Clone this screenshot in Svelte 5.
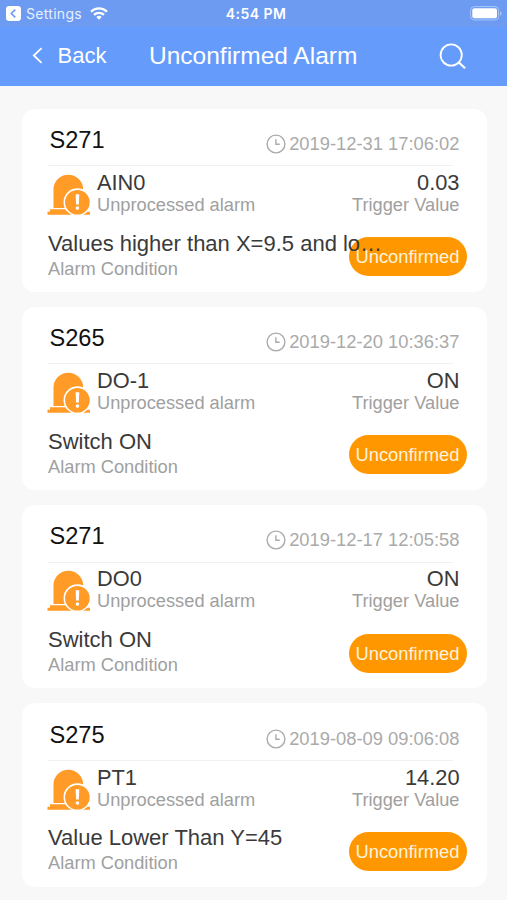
<script lang="ts">
  interface Alarm {
    station: string;
    time: string;
    name: string;
    value: string;
    condition: string;
  }

  const alarms: Alarm[] = [
    {
      station: 'S271',
      time: '2019-12-31 17:06:02',
      name: 'AIN0',
      value: '0.03',
      condition: 'Values higher than X=9.5 and lo…'
    },
    { station: 'S265', time: '2019-12-20 10:36:37', name: 'DO-1', value: 'ON', condition: 'Switch ON' },
    { station: 'S271', time: '2019-12-17 12:05:58', name: 'DO0', value: 'ON', condition: 'Switch ON' },
    { station: 'S275', time: '2019-08-09 09:06:08', name: 'PT1', value: '14.20', condition: 'Value Lower Than Y=45' }
  ];
</script>

<div class="screen">
  <header>
    <div class="status-bar">
      <div class="status-left">
        <svg width="15" height="15" viewBox="0 0 15 15">
          <rect width="15" height="15" rx="3.2" fill="#fff" />
          <path d="M9.3 3.6 5.3 7.5l4 3.9" fill="none" stroke="#6b9bf2" stroke-width="1.6" />
        </svg>
        <span class="settings">Settings</span>
        <svg class="wifi" width="18" height="13" viewBox="0 0 18 13">
          <g fill="none" stroke="#fff" stroke-width="2.3">
            <path d="M1 4.7a11.4 11.4 0 0 1 16 0" />
            <path d="M4 7.9a7.2 7.2 0 0 1 10 0" />
          </g>
          <path d="M6.3 10a3.9 3.9 0 0 1 5.4 0L9 12.8z" fill="#fff" />
        </svg>
      </div>
      <span class="clock">4:54 PM</span>
      <svg class="battery" width="32" height="15" viewBox="0 0 32 15">
        <rect x=".6" y=".6" width="28" height="13.3" rx="3.6" fill="none" stroke="#a9c6fb" />
        <rect x="2.3" y="2.3" width="24.7" height="9.9" rx="2" fill="#fff" />
        <path d="M30 5v4.8q1.6-.7 1.6-2.4T30 5z" fill="#a9c6fb" />
      </svg>
    </div>
    <nav class="nav-bar">
      <button class="back">
        <svg width="11" height="17" viewBox="0 0 11 17">
          <path d="M9.6 1.1 1.8 8.5l7.8 7.4" fill="none" stroke="#fff" stroke-width="1.8" />
        </svg>
        <span>Back</span>
      </button>
      <h1>Unconfirmed Alarm</h1>
      <button class="search" aria-label="Search">
        <svg width="28" height="27" viewBox="0 0 28 27" fill="none" stroke="#fff" stroke-width="1.8">
          <circle cx="12.2" cy="12" r="10.6" />
          <path d="m19.6 19.2 6.5 6" stroke-width="2.2" />
        </svg>
      </button>
    </nav>
  </header>

  <main>
    {#each alarms as alarm}
      <article class="card">
        <div class="card-head">
          <h2>{alarm.station}</h2>
          <div class="time">
            <svg width="20" height="20" viewBox="0 0 20 20" fill="none" stroke="#aaa" stroke-width="1.4">
              <circle cx="10" cy="10" r="8.9" />
              <path d="M9.9 5.2v5.1h3.8" />
            </svg>
            <span>{alarm.time}</span>
          </div>
        </div>

        <div class="card-row">
          <svg class="siren" width="44" height="42" viewBox="0 0 44 42">
            <path d="M6.5 34V15.5a14.8 14.8 0 0 1 29.6 0V34z" fill="#ff9b26" />
            <path d="M3 35.3h37.5v2.4H43v3H.5v-3H3z" fill="#ff9b26" />
            <circle cx="30.4" cy="28.2" r="13.1" fill="#ff9b26" stroke="#fff" stroke-width="1.6" />
            <path d="M28.6 20.2h3.7l-.5 10.3h-2.7z" fill="#fff" />
            <circle cx="30.45" cy="34.1" r="1.8" fill="#fff" />
          </svg>
          <div class="pair">
            <strong>{alarm.name}</strong>
            <small>Unprocessed alarm</small>
          </div>
          <div class="pair right">
            <strong>{alarm.value}</strong>
            <small>Trigger Value</small>
          </div>
        </div>

        <div class="condition">
          <p>{alarm.condition}</p>
          <small>Alarm Condition</small>
        </div>
        <button class="badge">Unconfirmed</button>
      </article>
    {/each}
  </main>
</div>

<style>
  :global(body) {
    background: #f8f8f8;
  }

  .screen {
    height: 900px;
    overflow: hidden;
    background: #f8f8f8;
    font-family: 'Liberation Sans', Arial, sans-serif;
  }

  button {
    padding: 0;
    border: 0;
    background: none;
    font: inherit;
    color: inherit;
  }

  header {
    height: 86px;
    background: #659bfa;
    color: #fff;
  }

  .status-bar {
    display: grid;
    grid-template-columns: 1fr auto 1fr;
    align-items: center;
    height: 27px;
    padding: 0 5px 0 6px;
    background: #6c9bf1;
    font-family: Inter, sans-serif;
  }

  .status-left {
    display: flex;
    align-items: center;
  }

  .settings {
    margin-left: 5px;
    font-size: 14px;
    color: #e7effe;
    letter-spacing: 0.3px;
  }

  .wifi {
    margin-left: 8px;
  }

  .clock {
    margin-left: 4px;
    font-size: 14px;
    font-weight: 600;
    letter-spacing: 0.45px;
  }

  .battery {
    justify-self: end;
  }

  .nav-bar {
    display: flex;
    align-items: center;
    height: 57px;
    padding: 0 40px 0 32px;
  }

  .back {
    display: flex;
    align-items: center;
    gap: 14.5px;
    width: 117px;
    font-size: 22px;
  }

  h1 {
    margin: 0;
    font-size: 24.5px;
    font-weight: 400;
  }

  .search {
    display: flex;
    margin: 2px 0 0 auto;
  }

  main {
    display: flex;
    flex-direction: column;
    gap: 15px;
    padding: 22.5px 20px 0 22px;
  }

  .card {
    position: relative;
    box-sizing: border-box;
    flex: none;
    height: 183.3px;
    padding: 0 27.5px 0 26px;
    border-radius: 13px;
    background: #fff;
  }

  .card-head {
    display: flex;
    align-items: center;
    justify-content: space-between;
    height: 56.7px;
    margin-right: 7px;
    padding-left: 1.5px;
    box-shadow: 0 1px #f1f1f1;
  }

  h2 {
    margin: 7px 0 0;
    font-size: 23.6px;
    font-weight: 400;
    color: #111;
  }

  .time {
    display: flex;
    align-items: center;
    gap: 3px;
    margin: 14px -7px 0 0;
    font-size: 18.35px;
    color: #aaa;
  }

  .card-row {
    display: flex;
    margin-top: 4.6px;
  }

  .siren {
    flex: none;
    margin: 4px 6.5px 0 -1.5px;
  }

  .pair {
    display: flex;
    flex-direction: column;
  }

  .right {
    margin-left: auto;
    text-align: right;
  }

  strong,
  .condition p {
    margin: 0;
    font-size: 21.8px;
    font-weight: 400;
    line-height: 25px;
    color: #3a3a3a;
  }

  small {
    font-size: 18.25px;
    line-height: 20px;
    color: #a0a0a0;
  }

  .condition {
    position: relative;
    z-index: 1;
    margin-top: 14.8px;
    pointer-events: none;
  }

  .condition p {
    font-size: 22px;
    white-space: nowrap;
  }

  .condition small {
    display: block;
    line-height: 25px;
  }

  .badge {
    position: absolute;
    right: 20.5px;
    bottom: 15.8px;
    width: 118px;
    height: 39px;
    padding-top: 1px;
    border-radius: 20px;
    background: #ff9800;
    font-size: 18.35px;
    color: #fff3dc;
  }
</style>
